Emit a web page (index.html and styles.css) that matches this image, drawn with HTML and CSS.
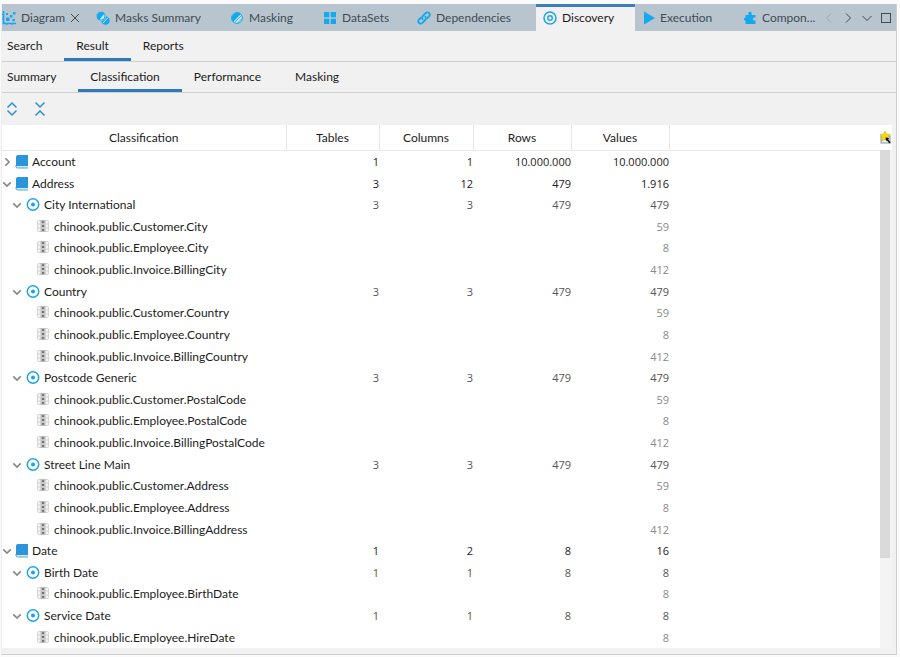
FILE: index.html
```html
<!DOCTYPE html>
<html lang="en">

<head>
	<meta charset="UTF-8">
	<meta name="viewport"
		content="width=device-width, initial-scale=1.0">
	<title>Discovery</title>
	<link rel="stylesheet" href="styles.css">
</head>

<body>
	<svg class="sprite" aria-hidden="true">
		<symbol id="right" viewBox="0 0 12 12">
			<path d="M4 1.5 L8.5 6 L4 10.5" fill="none" stroke="currentColor" />
		</symbol>
		<symbol id="left" viewBox="0 0 12 12">
			<path d="M8 1.5 L3.5 6 L8 10.5" fill="none" stroke="currentColor" />
		</symbol>
		<symbol id="down" viewBox="0 0 12 12">
			<path d="M1.5 4 L6 8.5 L10.5 4" fill="none" stroke="currentColor" />
		</symbol>
		<symbol id="book" viewBox="0 0 14 14">
			<path d="M3 0 H13 V11 H1 V2 Q1 0 3 0 Z" fill="#2b95db" />
			<path d="M1 11 H13 V13 H2.5 Q1 13 1 11.5 Z" fill="#d5eaf8" />
			<path d="M1 10 V11.5 Q1 13 2.5 13 H13" fill="none" stroke="#2b95db" stroke-width="0.8" />
		</symbol>
		<symbol id="target" viewBox="0 0 14 14">
			<circle cx="7" cy="6.5" r="5.7" fill="none" stroke="#18a5e8" stroke-width="1.5" />
			<circle cx="7" cy="6.5" r="2" fill="#18a5e8" />
		</symbol>
		<symbol id="column" viewBox="0 0 14 14">
			<rect x="1.5" y="0.5" width="11" height="11" rx="1" fill="#f3f3f3" stroke="#d4d4d4" />
			<path d="M1.5 4 H12.5 M1.5 8 H12.5" stroke="#d4d4d4" />
			<rect x="4.5" y="0" width="5" height="12" fill="#bbb" />
			<path d="M6 2.2 H8 M6 6 H8 M6 9.8 H8" stroke="#707070" stroke-width="1.8" />
			<path d="M4.5 4 H9.5 M4.5 8 H9.5" stroke="#ddd" stroke-width="0.8" />
		</symbol>
	</svg>

	<main class="panel">
		<header class="editor-bar">
			<div class="editor-tabs" role="tablist">
				<div class="editor-tab first">
					<button type="button" role="tab" class="tab-label">
						<svg class="tab-icon" viewBox="0 0 14 14">
							<path d="M1.5 0 V12.5 H14" fill="none" stroke="#12a9ef" stroke-width="1.6" />
							<path d="M0 3.5 H2 M0 8 H2 M5 12 V14 M10 12 V14" stroke="#12a9ef" />
							<path d="M4 6.5 H7.5 V10 H4 Z M8 4 H10.5 V6.5 H8 Z M11 1 H13.5 V3.5 H11 Z M10.5 8 H13 V10.3 H10.5 Z M4 2 H6 V4 H4 Z" fill="#12a9ef" />
						</svg>
						Diagram
					</button>
					<button type="button" class="close" aria-label="Close Diagram">
						<svg viewBox="0 0 10 10"><path d="M1 1 L9 9 M9 1 L1 9" stroke="currentColor" /></svg>
					</button>
				</div>
				<button type="button" role="tab" class="editor-tab">
					<svg class="tab-icon" viewBox="0 0 14 14">
						<circle cx="9.5" cy="9.5" r="4.3" fill="#12a9ef" />
						<circle cx="5" cy="5.2" r="4.9" fill="#b8c5cf" />
						<circle cx="5" cy="5.2" r="4" fill="#c6e5f5" stroke="#12a9ef" />
						<path d="M1 6 Q1 2 5 1.2 Q7 1 8.5 2.5 L3 9 Q1 8 1 6 Z" fill="#12a9ef" />
						<path d="M7 12 L12 6.5" stroke="#c6e5f5" />
					</svg>
					Masks Summary
				</button>
				<button type="button" role="tab" class="editor-tab">
					<svg class="tab-icon" viewBox="0 0 14 14">
						<circle cx="7" cy="7" r="5.4" fill="#c9e6f5" stroke="#12a9ef" />
						<path d="M3 11 A5.7 5.7 0 0 1 11 3 Z" fill="#12a9ef" />
						<path d="M4.5 11.5 L11.5 4.5 M7.5 12 L12 7.5" stroke="#12a9ef" stroke-width="0.8" />
					</svg>
					Masking
				</button>
				<button type="button" role="tab" class="editor-tab">
					<svg class="tab-icon" viewBox="0 0 14 14">
						<path d="M1 1 H6.3 V6.3 H1 Z M7.7 1 H13 V6.3 H7.7 Z M1 7.7 H6.3 V13 H1 Z M7.7 7.7 H13 V13 H7.7 Z" fill="#12a9ef" />
					</svg>
					DataSets
				</button>
				<button type="button" role="tab" class="editor-tab">
					<svg class="tab-icon" viewBox="0 0 14 14">
						<g fill="none" stroke="#12a9ef" stroke-width="1.8" stroke-linecap="round">
							<path d="M5.6 8.2 Q4.4 6.4 5.8 5 L8.6 2.1 Q10.2 0.6 12 2 Q13.6 3.8 12 5.5 L10.4 7" />
							<path d="M8.4 5.8 Q9.6 7.6 8.2 9 L5.4 11.9 Q3.8 13.4 2 12 Q0.4 10.2 2 8.5 L3.6 7" />
						</g>
					</svg>
					Dependencies
				</button>
				<button type="button" role="tab" aria-selected="true" class="editor-tab active">
					<svg class="tab-icon" viewBox="0 0 14 14">
						<circle cx="7" cy="7" r="6" fill="none" stroke="#18a5e8" stroke-width="1.5" />
						<circle cx="7" cy="7" r="2.3" fill="none" stroke="#18a5e8" stroke-width="1.4" />
					</svg>
					Discovery
				</button>
				<button type="button" role="tab" class="editor-tab">
					<svg class="tab-icon" viewBox="0 0 14 14"><path d="M3 0.5 L14 7 L3 13.5 Z" fill="#12a9ef" /></svg>
					Execution
				</button>
				<button type="button" role="tab" class="editor-tab">
					<svg class="tab-icon" viewBox="0 0 14 14">
						<path d="M2.5 4 H5.5 Q4.8 0.8 7 0.8 Q9.2 0.8 8.5 4 H12.5 V6.5 Q9.8 6 9.8 8 Q9.8 10 12.5 9.5 V13 H2.5 V9.8 Q0.8 9.8 0.8 8 Q0.8 6.6 2.5 6.8 Z" fill="#12a9ef" />
					</svg>
					Compon...
				</button>
			</div>
			<div class="bar-tools">
				<button type="button" disabled aria-label="Previous tab"><svg><use href="#left" /></svg></button>
				<button type="button" aria-label="Next tab"><svg><use href="#right" /></svg></button>
				<button type="button" aria-label="Tab list"><svg><use href="#down" /></svg></button>
				<button type="button" aria-label="Maximize"><svg viewBox="0 0 12 12"><rect x="1.5" y="1.5" width="9" height="9" fill="none" stroke="currentColor" /></svg></button>
			</div>
		</header>

		<nav class="sub-tabs" role="tablist">
			<button type="button" role="tab">Search</button>
			<button type="button" role="tab" aria-selected="true" class="active">Result</button>
			<button type="button" role="tab">Reports</button>
		</nav>
		<nav class="sub-tabs" role="tablist">
			<button type="button" role="tab">Summary</button>
			<button type="button" role="tab" aria-selected="true" class="active">Classification</button>
			<button type="button" role="tab">Performance</button>
			<button type="button" role="tab">Masking</button>
		</nav>

		<div class="toolbar">
			<button type="button" aria-label="Expand all">
				<svg viewBox="0 0 12 16"><path d="M1.5 6.5 L6 2 L10.5 6.5 M1.5 9.5 L6 14 L10.5 9.5" fill="none" stroke="#2b90d4" stroke-width="1.5" /></svg>
			</button>
			<button type="button" aria-label="Collapse all">
				<svg viewBox="0 0 12 16"><path d="M1.5 1.5 L6 6 L10.5 1.5 M1.5 14.5 L6 10 L10.5 14.5" fill="none" stroke="#2b90d4" stroke-width="1.5" /></svg>
			</button>
		</div>

		<section class="tree">
			<table class="tree-table">
				<colgroup>
					<col class="col-name">
					<col class="col-tables">
					<col class="col-columns">
					<col class="col-rows">
					<col class="col-values">
					<col>
				</colgroup>
				<thead>
					<tr><th>Classification</th><th>Tables</th><th>Columns</th><th>Rows</th><th>Values</th><td></td></tr>
				</thead>
				<tbody>
					<tr class="group">
						<td><div class="node"><button type="button" class="toggle" aria-label="Expand Account"><svg><use href="#right" /></svg></button><svg class="icon"><use href="#book" /></svg>Account</div></td>
						<td>1</td><td>1</td><td>10.000.000</td><td>10.000.000</td><td></td>
					</tr>
					<tr class="group">
						<td><div class="node"><button type="button" class="toggle" aria-label="Collapse Address"><svg><use href="#down" /></svg></button><svg class="icon"><use href="#book" /></svg>Address</div></td>
						<td>3</td><td>12</td><td>479</td><td>1.916</td><td></td>
					</tr>
					<tr class="type">
						<td><div class="node"><button type="button" class="toggle" aria-label="Collapse City International"><svg><use href="#down" /></svg></button><svg class="icon"><use href="#target" /></svg>City International</div></td>
						<td>3</td><td>3</td><td>479</td><td>479</td><td></td>
					</tr>
					<tr class="leaf">
						<td><div class="node"><svg class="icon"><use href="#column" /></svg>chinook.public.Customer.City</div></td>
						<td></td><td></td><td></td><td>59</td><td></td>
					</tr>
					<tr class="leaf">
						<td><div class="node"><svg class="icon"><use href="#column" /></svg>chinook.public.Employee.City</div></td>
						<td></td><td></td><td></td><td>8</td><td></td>
					</tr>
					<tr class="leaf">
						<td><div class="node"><svg class="icon"><use href="#column" /></svg>chinook.public.Invoice.BillingCity</div></td>
						<td></td><td></td><td></td><td>412</td><td></td>
					</tr>
					<tr class="type">
						<td><div class="node"><button type="button" class="toggle" aria-label="Collapse Country"><svg><use href="#down" /></svg></button><svg class="icon"><use href="#target" /></svg>Country</div></td>
						<td>3</td><td>3</td><td>479</td><td>479</td><td></td>
					</tr>
					<tr class="leaf">
						<td><div class="node"><svg class="icon"><use href="#column" /></svg>chinook.public.Customer.Country</div></td>
						<td></td><td></td><td></td><td>59</td><td></td>
					</tr>
					<tr class="leaf">
						<td><div class="node"><svg class="icon"><use href="#column" /></svg>chinook.public.Employee.Country</div></td>
						<td></td><td></td><td></td><td>8</td><td></td>
					</tr>
					<tr class="leaf">
						<td><div class="node"><svg class="icon"><use href="#column" /></svg>chinook.public.Invoice.BillingCountry</div></td>
						<td></td><td></td><td></td><td>412</td><td></td>
					</tr>
					<tr class="type">
						<td><div class="node"><button type="button" class="toggle" aria-label="Collapse Postcode Generic"><svg><use href="#down" /></svg></button><svg class="icon"><use href="#target" /></svg>Postcode Generic</div></td>
						<td>3</td><td>3</td><td>479</td><td>479</td><td></td>
					</tr>
					<tr class="leaf">
						<td><div class="node"><svg class="icon"><use href="#column" /></svg>chinook.public.Customer.PostalCode</div></td>
						<td></td><td></td><td></td><td>59</td><td></td>
					</tr>
					<tr class="leaf">
						<td><div class="node"><svg class="icon"><use href="#column" /></svg>chinook.public.Employee.PostalCode</div></td>
						<td></td><td></td><td></td><td>8</td><td></td>
					</tr>
					<tr class="leaf">
						<td><div class="node"><svg class="icon"><use href="#column" /></svg>chinook.public.Invoice.BillingPostalCode</div></td>
						<td></td><td></td><td></td><td>412</td><td></td>
					</tr>
					<tr class="type">
						<td><div class="node"><button type="button" class="toggle" aria-label="Collapse Street Line Main"><svg><use href="#down" /></svg></button><svg class="icon"><use href="#target" /></svg>Street Line Main</div></td>
						<td>3</td><td>3</td><td>479</td><td>479</td><td></td>
					</tr>
					<tr class="leaf">
						<td><div class="node"><svg class="icon"><use href="#column" /></svg>chinook.public.Customer.Address</div></td>
						<td></td><td></td><td></td><td>59</td><td></td>
					</tr>
					<tr class="leaf">
						<td><div class="node"><svg class="icon"><use href="#column" /></svg>chinook.public.Employee.Address</div></td>
						<td></td><td></td><td></td><td>8</td><td></td>
					</tr>
					<tr class="leaf">
						<td><div class="node"><svg class="icon"><use href="#column" /></svg>chinook.public.Invoice.BillingAddress</div></td>
						<td></td><td></td><td></td><td>412</td><td></td>
					</tr>
					<tr class="group">
						<td><div class="node"><button type="button" class="toggle" aria-label="Collapse Date"><svg><use href="#down" /></svg></button><svg class="icon"><use href="#book" /></svg>Date</div></td>
						<td>1</td><td>2</td><td>8</td><td>16</td><td></td>
					</tr>
					<tr class="type">
						<td><div class="node"><button type="button" class="toggle" aria-label="Collapse Birth Date"><svg><use href="#down" /></svg></button><svg class="icon"><use href="#target" /></svg>Birth Date</div></td>
						<td>1</td><td>1</td><td>8</td><td>8</td><td></td>
					</tr>
					<tr class="leaf">
						<td><div class="node"><svg class="icon"><use href="#column" /></svg>chinook.public.Employee.BirthDate</div></td>
						<td></td><td></td><td></td><td>8</td><td></td>
					</tr>
					<tr class="type">
						<td><div class="node"><button type="button" class="toggle" aria-label="Collapse Service Date"><svg><use href="#down" /></svg></button><svg class="icon"><use href="#target" /></svg>Service Date</div></td>
						<td>1</td><td>1</td><td>8</td><td>8</td><td></td>
					</tr>
					<tr class="leaf">
						<td><div class="node"><svg class="icon"><use href="#column" /></svg>chinook.public.Employee.HireDate</div></td>
						<td></td><td></td><td></td><td>8</td><td></td>
					</tr>
				</tbody>
			</table>
			<aside class="side">
				<button type="button" class="columns-button" aria-label="Choose columns">
					<svg viewBox="0 0 12 14">
						<rect x="1" y="5" width="9" height="7" fill="#e8edf5" stroke="#8493a8" />
						<path d="M5 0 L6.6 3 L10.4 3.5 L7.8 6.3 L8.5 10 L5 8.2 L1.6 10 L2.2 6.3 L0 3.5 L3.5 3 Z" fill="#f5d90a" stroke="#c9a800" stroke-width="0.5" />
						<path d="M6.5 7.5 L10 12" stroke="#111" stroke-width="1.5" />
						<path d="M5.5 6.5 L9.5 7 L6 10 Z" fill="#111" />
					</svg>
				</button>
				<div class="scroll-track"><div class="scroll-thumb"></div></div>
			</aside>
		</section>
	</main>
</body>

</html>
```
FILE: styles.css
```css
:root {
	--panel-bg: #f1f1f1;
	--bar-bg: #b8c5cf;
	--line: #cfcfcf;
	--accent: #3079b8;
	--text-color: #1c1c1c;
}

* {
	box-sizing: border-box;
}

body {
	margin: 0;
	height: 100vh;
	padding: 4px 3px 2px 1px;
	display: flex;
	background: #fafafa;
	color: var(--text-color);
	font-family: Lato, "Open Sans", sans-serif;
	font-size: 12px;
	line-height: 20px;
}

button {
	margin: 0;
	padding: 0;
	border: 0;
	background: none;
	color: inherit;
	font: inherit;
	cursor: pointer;
}

svg {
	display: block;
	flex: none;
}

.sprite {
	display: none;
}

.panel {
	flex: 1;
	min-width: 0;
	display: flex;
	flex-direction: column;
	background: var(--panel-bg);
	border: 1px solid var(--line);
	border-top: 0;
	border-left-color: #eee;
}

/* editor tabs */
.editor-bar {
	display: flex;
	height: 27px;
	background: var(--bar-bg);
	color: #414b54;
}

.editor-tabs {
	flex: 1;
	display: grid;
	grid-template-columns: 88px 134px 93px 94px 125px 99px 102px 1fr;
}

.editor-tab {
	display: flex;
	align-items: center;
	gap: 5px;
	padding-left: 6px;
	white-space: nowrap;
}

.editor-tab.first {
	padding-left: 0;
}

.editor-tab.active {
	background: var(--panel-bg);
	border-top: 3px solid #3c7ec0;
	padding-left: 7px;
	padding-bottom: 3px;
	color: var(--text-color);
}

.tab-label {
	display: flex;
	align-items: center;
	gap: 5px;
}

.tab-icon {
	width: 14px;
	height: 14px;
}

.close svg {
	width: 10px;
	height: 10px;
}

.bar-tools {
	display: flex;
	align-items: center;
	gap: 7px;
	padding-right: 4px;
}

.bar-tools svg {
	width: 12px;
	height: 12px;
}

.bar-tools button:disabled {
	color: #98a4ae;
}

/* inner tab rows */
.sub-tabs {
	display: flex;
	height: 31px;
	border-bottom: 1px solid var(--line);
}

.sub-tabs button {
	padding: 2px 22px 0 12px;
	border-bottom: 3px solid transparent;
}

.sub-tabs button:first-child {
	padding-left: 5px;
}

.sub-tabs .active {
	border-bottom-color: var(--accent);
}

.toolbar {
	display: flex;
	align-items: center;
	gap: 16px;
	height: 32px;
	padding-left: 4px;
}

.toolbar svg {
	width: 12px;
	height: 16px;
}

/* classification tree */
.tree {
	flex: 1;
	min-height: 0;
	display: flex;
	margin: 0 4px 6px 0;
	background: #fff;
}

.tree-table {
	flex: 1;
	height: 100%;
	table-layout: fixed;
	border-collapse: collapse;
}

.col-name {
	width: 284px;
}

.col-tables {
	width: 93px;
}

.col-columns {
	width: 94px;
}

.col-rows,
.col-values {
	width: 98px;
}

thead tr {
	height: 25px;
	border-bottom: 1px solid #e9e9e9;
}

th,
td {
	padding: 1px 0 0;
	line-height: 18px;
	text-align: right;
	white-space: nowrap;
}

th {
	font-weight: normal;
	text-align: center;
	border-right: 1px solid #e6e6e6;
}

/* counts are set in a face with narrower figures */
tbody td + td {
	font-family: "Open Sans", sans-serif;
	font-size: 11px;
}

.node {
	display: flex;
	align-items: center;
	gap: 4px;
}

.group .node {
	gap: 3px;
}

.toggle {
	color: #888;
}

.toggle svg {
	width: 10px;
	height: 10px;
	stroke-width: 2;
}

.icon {
	width: 14px;
	height: 14px;
}

.type .node {
	padding-left: 10px;
}

.leaf .node {
	padding-left: 34px;
}

.type td + td {
	color: #555;
}

.leaf td + td {
	color: #8a8a8a;
}

.side {
	width: 12px;
	display: flex;
	flex-direction: column;
	background: #f4f4f4;
}

.columns-button {
	height: 25px;
	background: #fff;
}

.columns-button svg {
	width: 12px;
	height: 14px;
}

.scroll-track {
	flex: 1;
}

.scroll-thumb {
	width: 10px;
	height: 82%;
	background: #dadada;
}
```
